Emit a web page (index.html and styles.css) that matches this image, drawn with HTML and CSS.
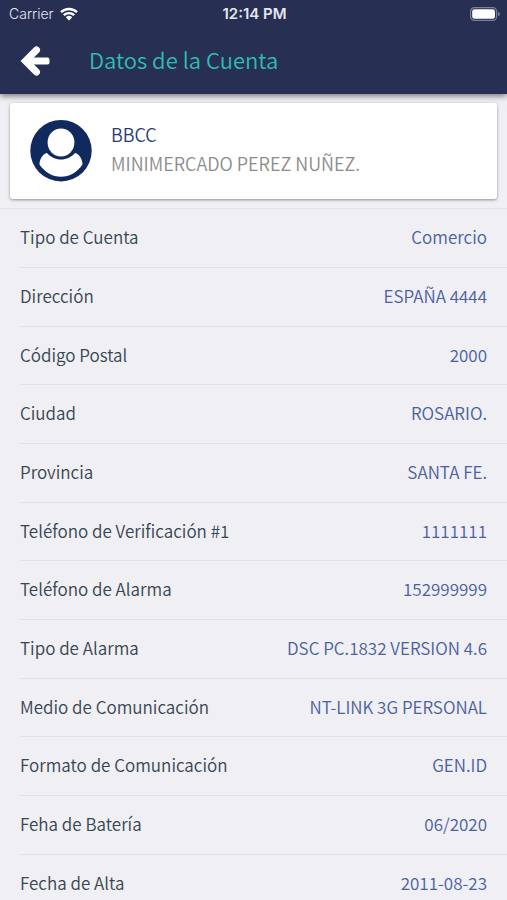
FILE: index.html
```html
<!DOCTYPE html>
<html lang="es">
<head>
  <meta charset="UTF-8">
  <meta name="viewport" content="width=device-width, initial-scale=1">
  <title>Datos de la Cuenta</title>
  <link rel="stylesheet" href="styles.css">
</head>
<body>

  <header class="header">
    <div class="status-bar">
      <div class="carrier">
        <span>Carrier</span>
        <svg class="wifi" viewBox="0 0 18 14" aria-hidden="true">
          <path d="M1 5.2a11.6 11.6 0 0 1 16 0M3.8 8.2a7.6 7.6 0 0 1 10.4 0" fill="none" stroke="#fff" stroke-width="2.4"/>
          <path d="M9 13.4 5.8 10.3a4.7 4.7 0 0 1 6.4 0z" fill="#fff"/>
        </svg>
      </div>
      <span class="time">12:14 PM</span>
      <svg class="battery" viewBox="0 0 30 14" aria-hidden="true">
        <rect x=".6" y=".6" width="26" height="12.8" rx="3.8" fill="none" stroke="#7b809b" stroke-width="1.2"/>
        <rect x="2.2" y="2.2" width="22.8" height="9.6" rx="2.4" fill="#fff"/>
        <path d="M28 4.8q2 .8 2 2.2t-2 2.2z" fill="#7b809b"/>
      </svg>
    </div>
    <div class="nav-bar">
      <button class="back" type="button" aria-label="Volver">
        <svg viewBox="0 0 30 30" aria-hidden="true">
          <path d="M16.5 4 5.5 15l11 11" fill="none" stroke="#fff" stroke-width="7" stroke-linecap="round"/>
          <rect x="6" y="11.4" width="23.5" height="7.2" rx="2" fill="#fff"/>
        </svg>
      </button>
      <h1>Datos de la Cuenta</h1>
    </div>
  </header>

  <main>
    <section class="card">
      <svg class="avatar" viewBox="0 0 62 62" aria-hidden="true">
        <circle cx="31" cy="30.7" r="30.7" fill="#10295f"/>
        <path d="M17 33C12.5 34 9.500 39.500 9.500 44.500c5 7.500 13 12.300 21.500 12.300S47.500 52 52.500 44.500c0-5-3-10.500-7.500-11.500C41.500 37 36.500 39.500 31 39.500S20.500 37 17 33z" fill="#fff"/>
        <ellipse cx="31" cy="22.500" rx="13.400" ry="14" fill="#fff"/>
      </svg>
      <div>
        <h2>BBCC</h2>
        <p>MINIMERCADO PEREZ NUÑEZ.</p>
      </div>
    </section>

    <dl class="details">
      <div class="row"><dt>Tipo de Cuenta</dt><dd>Comercio</dd></div>
      <div class="row"><dt>Dirección</dt><dd>ESPAÑA 4444</dd></div>
      <div class="row"><dt>Código Postal</dt><dd>2000</dd></div>
      <div class="row"><dt>Ciudad</dt><dd>ROSARIO.</dd></div>
      <div class="row"><dt>Provincia</dt><dd>SANTA FE.</dd></div>
      <div class="row"><dt>Teléfono de Verificación #1</dt><dd>1111111</dd></div>
      <div class="row"><dt>Teléfono de Alarma</dt><dd>152999999</dd></div>
      <div class="row"><dt>Tipo de Alarma</dt><dd>DSC PC.1832 VERSION 4.6</dd></div>
      <div class="row"><dt>Medio de Comunicación</dt><dd>NT-LINK 3G PERSONAL</dd></div>
      <div class="row"><dt>Formato de Comunicación</dt><dd>GEN.ID</dd></div>
      <div class="row"><dt>Feha de Batería</dt><dd>06/2020</dd></div>
      <div class="row"><dt>Fecha de Alta</dt><dd>2011-08-23</dd></div>
    </dl>
  </main>

</body>
</html>
```
FILE: styles.css
```css
* {
  box-sizing: border-box;
}
body {
  margin: 0;
  background: #efeff4;
  font-family: "Noto Sans CJK SC", "Open Sans", sans-serif;
  font-size: 17px;
  font-weight: 350;
  line-height: 24px;
}
h1, h2, p, dl, dd {
  margin: 0;
  font-weight: inherit;
}
.header {
  background: #273052;
  color: #fff;
  box-shadow: 0 2px 6px rgba(0, 0, 0, 0.5);
}
.status-bar {
  display: grid;
  grid-template-columns: 1fr auto 1fr;
  align-items: center;
  height: 27px;
  padding: 0 7px 0 9px;
  font-family: Inter, sans-serif;
  font-size: 14px;
}
.carrier {
  display: flex;
  align-items: center;
  gap: 6px;
  color: #e4e6f0;
}
.wifi {
  width: 18px;
  height: 14px;
}
.time {
  color: #e4e6f0;
  font-size: 15px;
  font-weight: 600;
}
.battery {
  justify-self: end;
  width: 30px;
  height: 14px;
}
.nav-bar {
  display: flex;
  align-items: center;
  gap: 39px;
  height: 67px;
  padding: 0 20px;
}
.back {
  width: 30px;
  height: 30px;
  padding: 0;
  border: none;
  background: none;
  cursor: pointer;
}
.back svg {
  display: block;
}
.nav-bar h1 {
  padding-bottom: 4px;
  color: #2fbdb3;
  font-size: 22px;
}
.card {
  display: flex;
  align-items: center;
  gap: 19px;
  min-height: 96px;
  margin: 9px 10px;
  padding: 0 20px;
  border-radius: 3px;
  background: #fff;
  box-shadow: 0 1px 3px rgba(0, 0, 0, 0.4);
}
.avatar {
  flex: none;
  width: 62px;
  height: 62px;
}
.card h2,
.card p {
  font-size: 18px;
  line-height: 29px;
}
.card h2 {
  color: #2b3a70;
}
.card p {
  padding-bottom: 4px;
  color: #8c8c8c;
}
.details {
  border-top: 1px solid #e4e4e9;
}
.row {
  display: flex;
  align-items: center;
  justify-content: space-between;
  gap: 16px;
  min-height: 59px;
  margin-left: 20px;
  padding: 0 20px 2px 0;
  border-bottom: 1px solid #e0e0e5;
}
.row:nth-child(3n) {
  min-height: 58px;
}
.row dt {
  color: #374650;
}
.row dd {
  color: #4a60a0;
  text-align: right;
}
```
